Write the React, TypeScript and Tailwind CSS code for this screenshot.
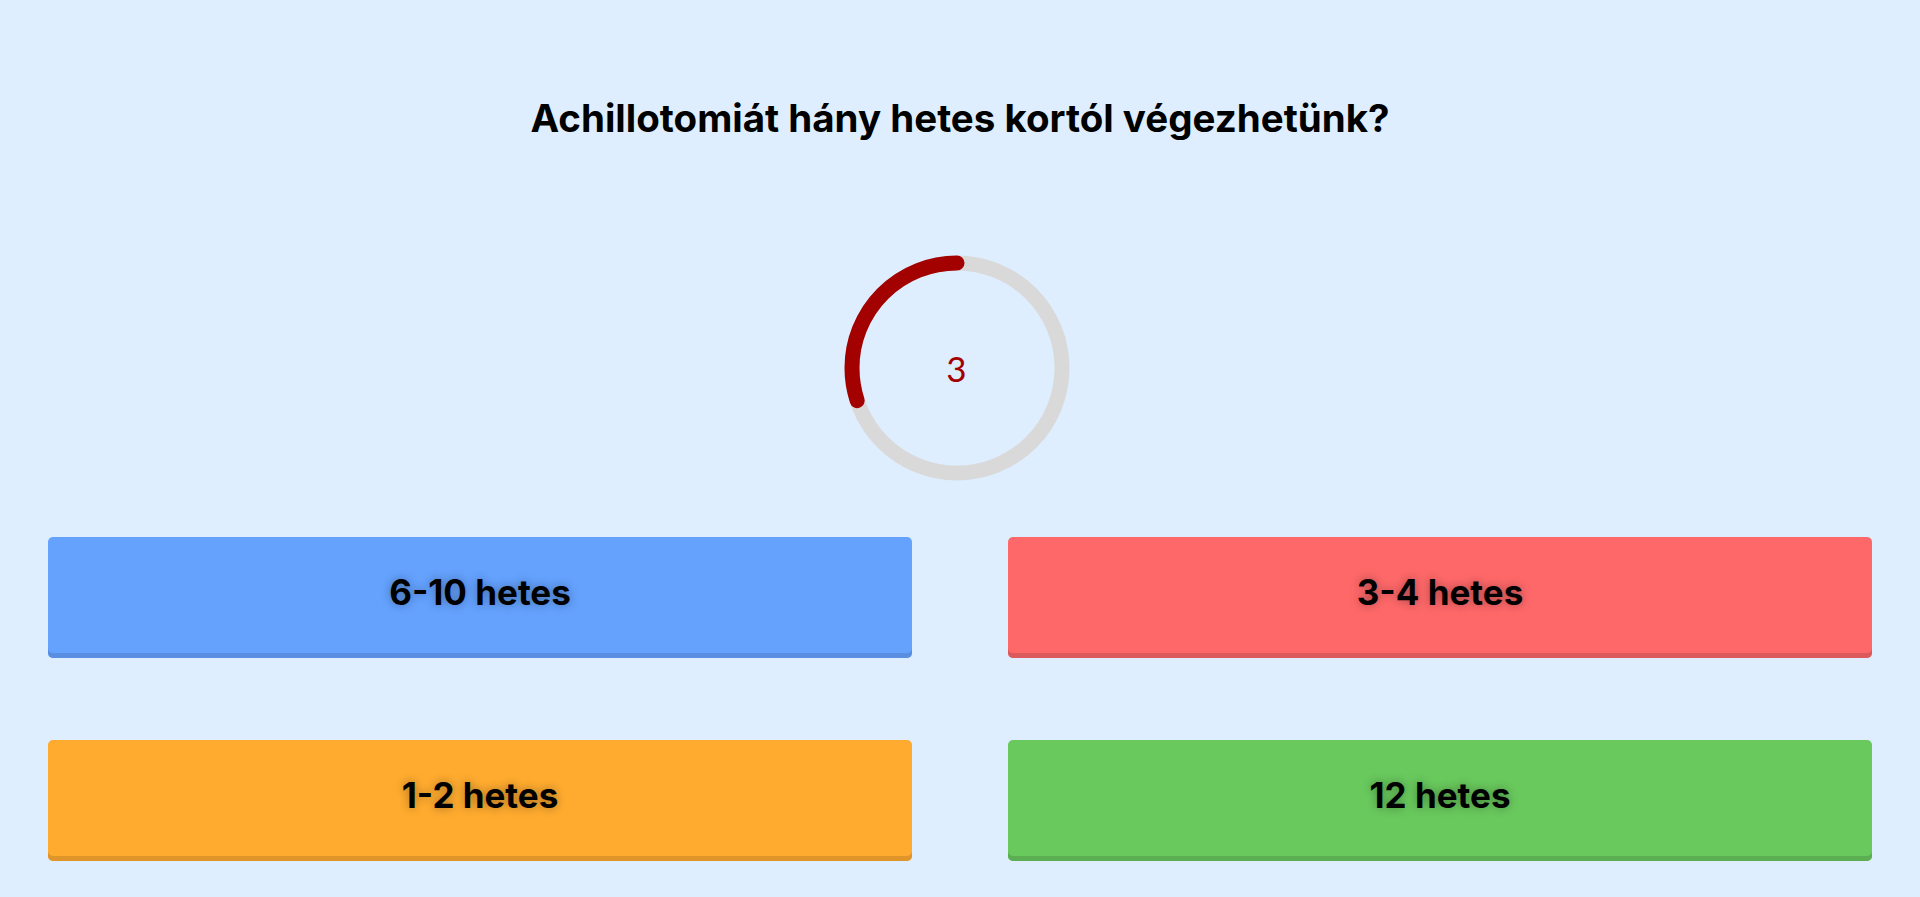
const answers = [
  { label: '6-10 hetes', className: 'bg-[#64a2fe] shadow-[inset_0_-5px_0_#5a8ee0]' },
  { label: '3-4 hetes', className: 'bg-[#fe6869] shadow-[inset_0_-5px_0_#dc5a5b]' },
  { label: '1-2 hetes', className: 'bg-[#feab2f] shadow-[inset_0_-5px_0_#e0952a]' },
  { label: '12 hetes', className: 'bg-[#69c95d] shadow-[inset_0_-5px_0_#5cae52]' },
];

const Timer = ({ value, total }: { value: number; total: number }) => {
  const r = 105;
  const c = 2 * Math.PI * r;
  const part = (value / total) * c;
  return (
    <div className="relative w-[226px] h-[226px]">
      <svg width="226" height="226" viewBox="0 0 226 226">
        <circle cx="113" cy="113" r={r} fill="none" stroke="#d9d9d9" strokeWidth="15" />
        {/* counter-clockwise from 12 o'clock */}
        <circle
          cx="113"
          cy="113"
          r={r}
          fill="none"
          stroke="#a30000"
          strokeWidth="15"
          strokeLinecap="round"
          strokeDasharray={`${part} ${c}`}
          transform="translate(226 0) scale(-1 1) rotate(-90 113 113)"
        />
      </svg>
      <div className="absolute inset-0 flex items-center justify-center">
        <span className="font-['Lato',sans-serif] font-normal text-[35px] text-[#a30000] leading-none">
          {value}
        </span>
      </div>
    </div>
  );
};

const App = () => {
  return (
    <div className="min-h-[897px] bg-[#deeefe] font-['Inter',sans-serif] text-black">
      <div className="flex flex-col items-center pt-[94px]">
        <h1 className="text-[38.5px] leading-[48px] font-bold">
          Achillotomiát hány hetes kortól végezhetünk?
        </h1>
        <div className="mt-[113px] mr-[7px]">
          <Timer value={3} total={10} />
        </div>
      </div>
      <div className="grid grid-cols-2 gap-x-[96px] gap-y-[82px] px-12 mt-[56px] pb-[37px]">
        {answers.map((a) => (
          <button
            key={a.label}
            className={`h-[121px] rounded-[5px] pb-[11px] flex items-center justify-center text-[35px] font-bold [text-shadow:0_0_10px_rgba(0,0,0,0.35)] ${a.className}`}
          >
            {a.label}
          </button>
        ))}
      </div>
    </div>
  );
};

export default App;
